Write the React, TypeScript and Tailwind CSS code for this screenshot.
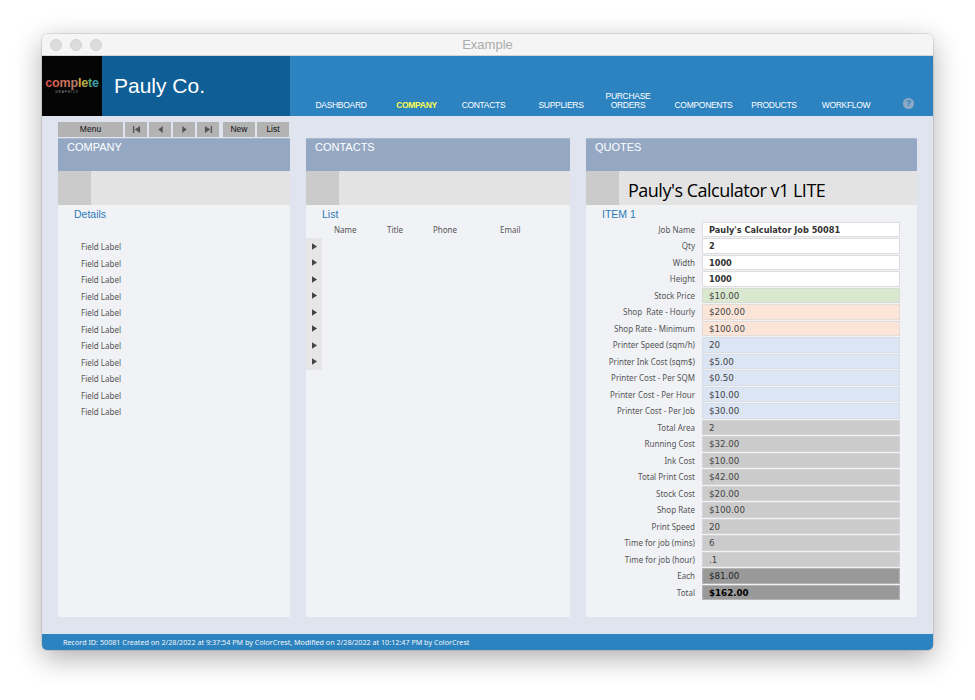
const sans = "font-['Liberation_Sans',Arial,sans-serif]";
const label = "font-['Noto_Sans',Tahoma,sans-serif]";
const value = "font-['DejaVu_Sans',Verdana,sans-serif]";

const nav = [
  { label: "DASHBOARD", cls: "w-[52px] ml-[25px] text-white" },
  { label: "COMPANY", cls: "w-[43px] ml-[28px] text-[#fdfd4f] font-bold" },
  { label: "CONTACTS", cls: "w-[45px] ml-[23px] text-white" },
  { label: "SUPPLIERS", cls: "w-[46px] ml-[32px] text-white" },
  { label: "PURCHASE ORDERS", cls: "w-[46px] ml-[21px] text-white" },
  { label: "COMPONENTS", cls: "w-[59px] ml-[23px] text-white" },
  { label: "PRODUCTS", cls: "w-[46px] ml-[18px] text-white" },
  { label: "WORKFLOW", cls: "w-[50px] ml-[24px] text-white" },
];

const fields = [
  { label: "Job Name", value: "Pauly's Calculator Job 50081", tone: "input" },
  { label: "Qty", value: "2", tone: "input" },
  { label: "Width", value: "1000", tone: "input" },
  { label: "Height", value: "1000", tone: "input" },
  { label: "Stock Price", value: "$10.00", tone: "green" },
  { label: "Shop  Rate - Hourly", value: "$200.00", tone: "orange" },
  { label: "Shop Rate - Minimum", value: "$100.00", tone: "orange" },
  { label: "Printer Speed (sqm/h)", value: "20", tone: "blue" },
  { label: "Printer Ink Cost (sqm$)", value: "$5.00", tone: "blue" },
  { label: "Printer Cost - Per SQM", value: "$0.50", tone: "blue" },
  { label: "Printer Cost - Per Hour", value: "$10.00", tone: "blue" },
  { label: "Printer Cost - Per Job", value: "$30.00", tone: "blue" },
  { label: "Total Area", value: "2", tone: "gray" },
  { label: "Running Cost", value: "$32.00", tone: "gray" },
  { label: "Ink Cost", value: "$10.00", tone: "gray" },
  { label: "Total Print Cost", value: "$42.00", tone: "gray" },
  { label: "Stock Cost", value: "$20.00", tone: "gray" },
  { label: "Shop Rate", value: "$100.00", tone: "gray" },
  { label: "Print Speed", value: "20", tone: "gray" },
  { label: "Time for job (mins)", value: "6", tone: "gray" },
  { label: "Time for job (hour)", value: ".1", tone: "gray" },
  { label: "Each", value: "$81.00", tone: "dark" },
  { label: "Total", value: "$162.00", tone: "total" },
];

const tones: Record<string, string> = {
  input: "bg-white border-[#dddddd] font-bold text-[8.2px] text-[#333]",
  green: "bg-[#d9e8cf] border-[#d6dcd2] text-[#444]",
  orange: "bg-[#fbe5d8] border-[#e4dcd7] text-[#444]",
  blue: "bg-[#dbe5f4] border-[#d9dde6] text-[#444]",
  gray: "bg-[#cbcbcb] border-[#d4d4d4] text-[#444]",
  dark: "bg-[#999999] border-[#b5b5b5] text-[#222]",
  total: "bg-[#999999] border-[#b5b5b5] font-bold text-black",
};

const logoLetters = [
  ["c", "text-[#d9534f]"],
  ["o", "text-[#d9634f]"],
  ["m", "text-[#c9705a]"],
  ["p", "text-[#b97a6a]"],
  ["l", "text-[#d8a03c]"],
  ["e", "text-[#b5b04a]"],
  ["t", "text-[#5aa56a]"],
  ["e", "text-[#3a9fa8]"],
];

function Glyph({ d }: { d: string }) {
  return (
    <svg viewBox="0 0 10 10" className="w-[9px] h-[9px] fill-[#555]">
      <path d={d} />
    </svg>
  );
}

function ToolButton({ className, children }: { className: string; children: React.ReactNode }) {
  return (
    <div className={`h-full bg-[#b3b3b3] flex items-center justify-center text-[8.5px] text-[#111] ${className}`}>
      {children}
    </div>
  );
}

function Panel({ title, big, children }: { title: string; big?: string; children: React.ReactNode }) {
  return (
    <div className="w-full flex-1 flex flex-col bg-[#f0f2f6]">
      <div className={`h-[33px] bg-[#94a8c3] border-t border-[#a9b8cd] pl-[9px] text-[11px] leading-[16px] text-white ${sans}`}>
        {title}
      </div>
      <div className="h-[34px] bg-[#e3e3e3] flex">
        <div className="w-[33px] h-full bg-[#cbcbcb]" />
        {big && (
          <div className="ml-[9px] mt-[6px] text-[18px] tracking-[-0.5px] leading-[26px] text-black font-['Open_Sans',sans-serif]">{big}</div>
        )}
      </div>
      {children}
    </div>
  );
}

export default function App() {
  return (
    <div className="h-[700px] bg-white pt-[34px] pl-[42px]">
      <div className="w-[891px] h-[616px] flex flex-col rounded-[5px] overflow-hidden bg-[#dfe4ef] shadow-[0_8px_28px_rgba(0,0,0,0.32),0_0_0_0.5px_rgba(0,0,0,0.18)]">
        <div className="h-[22px] shrink-0 relative flex items-center bg-[#f5f5f5] border-b border-[#d4d4d4] pl-[8px] gap-[8px]">
          <span className="w-[12px] h-[12px] rounded-full bg-[#dcdcdc] border border-[#d0d0d0]" />
          <span className="w-[12px] h-[12px] rounded-full bg-[#dcdcdc] border border-[#d0d0d0]" />
          <span className="w-[12px] h-[12px] rounded-full bg-[#dcdcdc] border border-[#d0d0d0]" />
          <span className={`absolute inset-x-0 text-center text-[13px] text-[#ababab] ${sans}`}>Example</span>
        </div>

        <div className={`h-[60px] shrink-0 flex bg-[#2d83bf] ${sans}`}>
          <div className="w-[60px] h-full bg-[#050505] flex flex-col items-center justify-center pb-[2px]">
            <div className="flex text-[12.5px] leading-[13px] font-bold tracking-[-0.2px]">
              {logoLetters.map(([ch, color], i) => (
                <span key={i} className={color}>{ch}</span>
              ))}
            </div>
            <div className="text-[3px] leading-[4px] tracking-[1px] text-[#999] -ml-[10px]">GRAPHICS</div>
          </div>
          <div className="w-[188px] h-full bg-[#0f5e96] pl-[12px] pt-[17px] text-[21px] leading-[26px] text-white">Pauly Co.</div>
          <div className="flex-1 flex items-end pb-[6px]">
            {nav.map((item) => (
              <div key={item.label} className={`shrink-0 flex justify-center text-center text-[8.5px] tracking-[-0.3px] leading-[9px] ${item.cls}`}>
                <span className={item.label.includes(" ") ? "" : "whitespace-nowrap"}>{item.label}</span>
              </div>
            ))}
            <div className="ml-[32px] mb-[1px] w-[11px] h-[11px] rounded-full bg-[#8fa9c4] text-[#2d83bf] text-[9px] leading-[11px] font-bold text-center">?</div>
          </div>
        </div>

        <div className="flex-1 flex px-[16px] pt-[6px] pb-[17px] gap-[16px] min-h-0">
          <div className="w-[232px] flex flex-col">
            <div className={`h-[15px] mb-[1px] flex ${sans}`}>
              <ToolButton className="w-[65px]">Menu</ToolButton>
              <ToolButton className="w-[22px] ml-[2px]"><Glyph d="M1 1h1.5v8H1zM9 1v8L3 5z" /></ToolButton>
              <ToolButton className="w-[22px] ml-[2px]"><Glyph d="M7.5 1v8L2.5 5z" /></ToolButton>
              <ToolButton className="w-[22px] ml-[2px]"><Glyph d="M2.5 1v8l5-4z" /></ToolButton>
              <ToolButton className="w-[22px] ml-[2px]"><Glyph d="M9 1H7.5v8H9zM1 1v8l6-4z" /></ToolButton>
              <ToolButton className="w-[32px] ml-[4px]">New</ToolButton>
              <ToolButton className="w-[32px] ml-[2px]">List</ToolButton>
            </div>
            <Panel title="COMPANY">
              <div className={`pl-[16px] pt-[3px] h-[34px] text-[10.5px] leading-[13px] text-[#2d7ab8] ${sans}`}>Details</div>
              <div className={`pl-[23px] text-[8px] text-[#555] ${label}`}>
                {Array.from({ length: 11 }).map((_, i) => (
                  <div key={i} className="h-[16.5px] leading-[16.5px]">Field Label</div>
                ))}
              </div>
            </Panel>
          </div>

          <div className="w-[264px] flex flex-col pt-[16px]">
            <Panel title="CONTACTS">
              <div className={`pl-[16px] pt-[3px] h-[17px] text-[10.5px] leading-[13px] text-[#2d7ab8] ${sans}`}>List</div>
              <div className={`h-[16px] flex items-center text-[8px] text-[#555] ${label}`}>
                <span className="w-[53px] ml-[28px]">Name</span>
                <span className="w-[46px]">Title</span>
                <span className="w-[67px]">Phone</span>
                <span>Email</span>
              </div>
              {Array.from({ length: 8 }).map((_, i) => (
                <div key={i} className="h-[16.5px] w-[16px] bg-[#e6e6e6] flex items-center justify-center">
                  <svg viewBox="0 0 6 8" className="w-[5px] h-[7px] fill-[#444]"><path d="M0 0l6 4-6 4z" /></svg>
                </div>
              ))}
            </Panel>
          </div>

          <div className="w-[331px] flex flex-col pt-[16px]">
            <Panel title="QUOTES" big="Pauly's Calculator v1 LITE">
              <div className={`pl-[16px] pt-[3px] h-[16px] text-[10.5px] leading-[13px] text-[#2d7ab8] ${sans}`}>ITEM 1</div>
              <div className="text-[8.7px]">
                {fields.map((f) => (
                  <div key={f.label} className="h-[16.5px] flex items-center">
                    <div className={`w-[109px] pt-[1px] text-[8px] text-right text-[#555] whitespace-pre ${label}`}>{f.label}</div>
                    <div className={`ml-[7px] w-[198px] h-[15.5px] pl-[6px] border leading-[14px] ${value} ${tones[f.tone]}`}>{f.value}</div>
                  </div>
                ))}
              </div>
            </Panel>
          </div>
        </div>

        <div className={`h-[16px] shrink-0 bg-[#2d83bf] pl-[21px] text-[7.2px] leading-[16px] text-[#f2f6fa] ${label}`}>
          Record ID: 50081 Created on 2/28/2022 at 9:37:54 PM by ColorCrest, Modified on 2/28/2022 at 10:12:47 PM by ColorCrest
        </div>
      </div>
    </div>
  );
}
